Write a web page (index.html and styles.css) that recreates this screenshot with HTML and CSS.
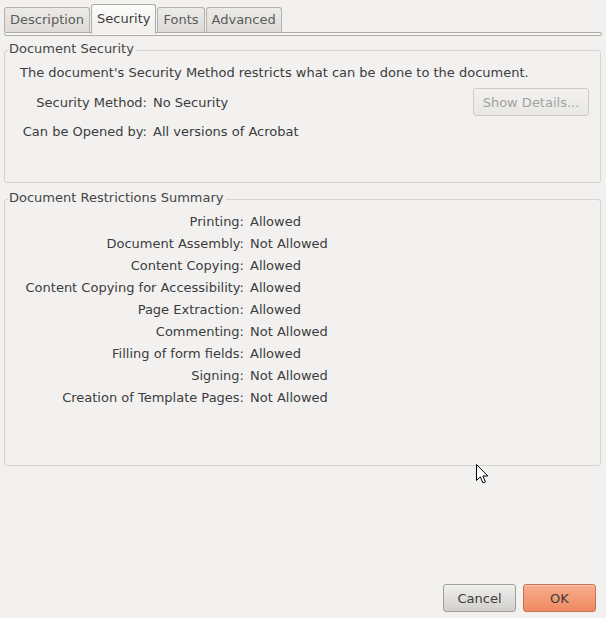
FILE: index.html
```html
<!DOCTYPE html>
<html lang="en">
<head>
<meta charset="utf-8">
<title>Document Properties - Security</title>
<link rel="stylesheet" href="styles.css">
</head>
<body>
<div class="dialog">
  <div class="tabs">
    <div class="tab">Description</div>
    <div class="tab tab-active">Security</div>
    <div class="tab">Fonts</div>
    <div class="tab">Advanced</div>
  </div>
  <div class="page-edge"></div>

  <fieldset class="frame frame-security">
    <legend class="frame-title">Document Security</legend>
    <div class="frame-body body-security">
      <div class="intro">The document's Security Method restricts what can be done to the document.</div>
      <div class="sec-grid">
        <div class="lbl">Security Method:</div>
        <div class="val">No Security</div>
        <button class="btn btn-disabled" disabled>Show Details...</button>
        <div class="lbl">Can be Opened by:</div>
        <div class="val val-wide">All versions of Acrobat</div>
      </div>
    </div>
  </fieldset>

  <fieldset class="frame frame-restrictions">
    <legend class="frame-title">Document Restrictions Summary</legend>
    <div class="frame-body body-restrictions">
      <div class="res-grid">
        <div class="lbl">Printing:</div><div class="val">Allowed</div>
        <div class="lbl">Document Assembly:</div><div class="val">Not Allowed</div>
        <div class="lbl">Content Copying:</div><div class="val">Allowed</div>
        <div class="lbl">Content Copying for Accessibility:</div><div class="val">Allowed</div>
        <div class="lbl">Page Extraction:</div><div class="val">Allowed</div>
        <div class="lbl">Commenting:</div><div class="val">Not Allowed</div>
        <div class="lbl">Filling of form fields:</div><div class="val">Allowed</div>
        <div class="lbl">Signing:</div><div class="val">Not Allowed</div>
        <div class="lbl">Creation of Template Pages:</div><div class="val">Not Allowed</div>
      </div>
    </div>
  </fieldset>

  <div class="spacer"></div>

  <div class="actions">
    <button class="btn btn-action btn-cancel">Cancel</button>
    <button class="btn btn-action btn-ok">OK</button>
  </div>

  <svg class="cursor" width="13" height="20" viewBox="0 0 13 20" aria-hidden="true">
    <path d="M0.5 0.5 L0.5 16.5 L4.3 12.9 L6.9 18.9 L9.4 17.8 L6.9 12 L11.8 12 Z" fill="#ffffff" stroke="#000000" stroke-width="1" stroke-linejoin="miter"/>
  </svg>
</div>
</body>
</html>
```

FILE: styles.css
```css
html, body {
  margin: 0;
  padding: 0;
  background: #f2f1f0;
}

body {
  font-family: "DejaVu Sans", "Liberation Sans", sans-serif;
  font-size: 13px;
  line-height: 15px;
  color: #3c3c3c;
}

.dialog {
  position: relative;
  width: 606px;
  height: 618px;
  display: flex;
  flex-direction: column;
  overflow: hidden;
}

/* ---------- tabs ---------- */
.tabs {
  display: flex;
  align-items: flex-start;
  gap: 1px;
  padding: 4px 0 0 4px;
  height: 29px;
  position: relative;
  z-index: 2;
}

.tab {
  box-sizing: border-box;
  height: 25px;
  margin-top: 3px;
  padding: 4px 5px 0;
  border: 1px solid #b5b2ad;
  border-bottom: none;
  border-radius: 3px 3px 0 0;
  background: linear-gradient(#ecebe8, #dddbd7);
  color: #5b5b5b;
  white-space: nowrap;
}

.tab-active {
  height: 30px;
  margin-top: 0;
  padding-top: 6px;
  background: linear-gradient(#fcfcfb, #f2f1f0 70%);
  color: #3c3c3c;
  border-color: #aeaba6;
}

.page-edge {
  margin: -1px 4px 0 4px;
  height: 2px;
  border: 1px solid #aeaba6;
  border-radius: 2px;
  background: #f8f8f7;
  position: relative;
  z-index: 1;
}

/* ---------- frames ---------- */
.frame {
  margin: 0 5px 0 4px;
  padding: 0;
  border: 1px solid #d6d4d0;
  border-radius: 3px;
  min-width: 0;
}

.frame-security {
  margin-top: 5px;
}

.frame-restrictions {
  margin-top: 7px;
}

.frame-title {
  margin-left: 3px;
  padding: 0 2px 4px 1px;
  line-height: 15px;
  color: #454545;
}

.frame-body {
  padding-left: 15px;
  padding-right: 11px;
}

.body-security {
  padding-top: 5px;
  padding-bottom: 43px;
}

.body-restrictions {
  padding-top: 5px;
  padding-bottom: 60px;
}

.intro {
  white-space: nowrap;
}

.sec-grid {
  display: grid;
  grid-template-columns: 127px 1fr auto;
  column-gap: 6px;
  row-gap: 8px;
  align-items: center;
  margin-top: 8px;
}

.res-grid {
  display: grid;
  grid-template-columns: 224px 1fr;
  column-gap: 6px;
  row-gap: 7px;
}

.lbl {
  text-align: right;
  white-space: nowrap;
}

.val {
  white-space: nowrap;
}

.val-wide {
  grid-column: 2 / 4;
}

/* ---------- buttons ---------- */
.btn {
  box-sizing: border-box;
  height: 28px;
  font-family: inherit;
  font-size: 13px;
  line-height: 15px;
  border-radius: 3px;
  padding: 0 8px;
  color: #3c3c3c;
}

.btn-disabled {
  width: 116px;
  border: 1px solid #cdcbc7;
  background: linear-gradient(#f3f2f1, #e8e7e5);
  color: #a3a29f;
}

.spacer {
  flex: 1;
}

.actions {
  display: flex;
  justify-content: flex-end;
  gap: 7px;
  padding: 0 10px 6px 0;
}

.btn-action {
  width: 73px;
}

.btn-cancel {
  border: 1px solid #a09e9a;
  background: linear-gradient(#efeeec, #d2d0cc);
  box-shadow: inset 0 1px 0 rgba(255, 255, 255, 0.6);
}

.btn-ok {
  border: 1px solid #c47454;
  background: linear-gradient(#f8ad8e, #ee8a61);
  box-shadow: inset 0 1px 0 rgba(255, 255, 255, 0.35);
}

/* ---------- pointer overlay ---------- */
.cursor {
  position: absolute;
  left: 476px;
  top: 464px;
  z-index: 5;
}
```
